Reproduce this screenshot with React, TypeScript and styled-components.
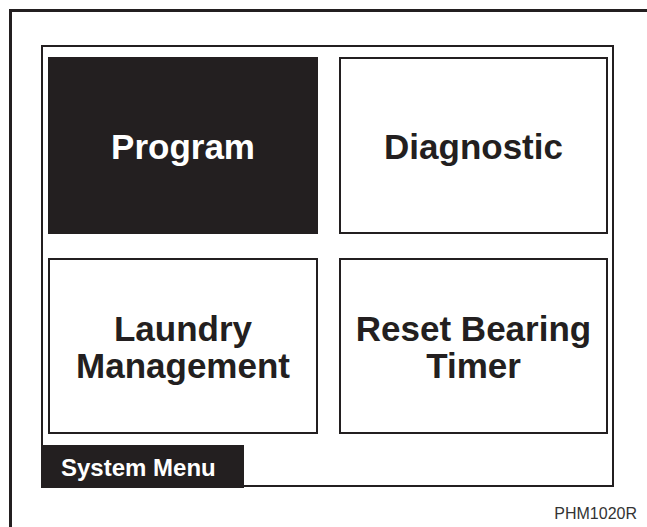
import React from "react"
import styled, { createGlobalStyle } from "styled-components"

const ink = "#231f20"

const GlobalStyle = createGlobalStyle`
  html, body {
    margin: 0;
    padding: 0;
    background: #ffffff;
    overflow: hidden;
    font-family: "Liberation Sans", Arial, sans-serif;
  }
`

const Page = styled.div`
  width: 647px;
  height: 527px;
  padding: 9px 0 0 9px;
  box-sizing: border-box;
`

// outer figure frame, its right and bottom edges run off the picture
const Sheet = styled.div`
  border-top: 3px solid ${ink};
  border-left: 3px solid ${ink};
  height: 100%;
  padding: 33px 0 0 29px;
  box-sizing: border-box;
`

const Screen = styled.div`
  width: 573px;
  border: 2px solid ${ink};
  box-sizing: border-box;
  padding: 10px 4px 0 5px;
  display: flex;
  flex-direction: column;
`

const ButtonGrid = styled.div`
  display: grid;
  grid-template-columns: 270px 269px;
  grid-template-rows: 177px 176px;
  column-gap: 21px;
  row-gap: 24px;
`

const MenuButton = styled.div<{ active?: boolean }>`
  border: 2px solid ${ink};
  box-sizing: border-box;
  background: ${({ active }) => (active ? ink : "#ffffff")};
  color: ${({ active }) => (active ? "#ffffff" : ink)};
  display: flex;
  align-items: center;
  justify-content: center;
  text-align: center;
  font-weight: bold;
  font-size: 35px;
  line-height: 37px;
  padding-top: 2px;
`

const MenuTab = styled.div`
  width: 203px;
  height: 43px;
  margin: 11px 0 -3px -7px;
  background: ${ink};
  color: #ffffff;
  font-weight: bold;
  font-size: 24px;
  display: flex;
  align-items: center;
  padding: 3px 0 0 20px;
  box-sizing: border-box;
`

const FigureCode = styled.div`
  width: 596px;
  margin-top: 18px;
  text-align: right;
  font-size: 16px;
  color: #333333;
`

const buttons = [
  { label: "Program", active: true },
  { label: "Diagnostic" },
  { label: "Laundry\nManagement" },
  { label: "Reset Bearing\nTimer" },
]

export default function App() {
  return (
    <>
      <GlobalStyle />
      <Page>
        <Sheet>
          <Screen>
            <ButtonGrid>
              {buttons.map((b) => (
                <MenuButton key={b.label} active={b.active}>
                  <span>
                    {b.label.split("\n").map((line, i) => (
                      <React.Fragment key={i}>
                        {i > 0 && <br />}
                        {line}
                      </React.Fragment>
                    ))}
                  </span>
                </MenuButton>
              ))}
            </ButtonGrid>
            <MenuTab>System Menu</MenuTab>
          </Screen>
          <FigureCode>PHM1020R</FigureCode>
        </Sheet>
      </Page>
    </>
  )
}
